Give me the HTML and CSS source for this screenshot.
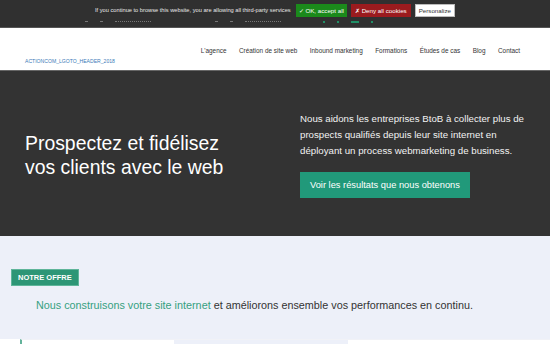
FILE: index.html
```html
<!DOCTYPE html>
<html lang="fr">
<head>
    <meta charset="UTF-8">
    <meta name="viewport" content="width=device-width, initial-scale=1.0">
    <title>Actioncom</title>
    <link rel="stylesheet" href="styles.css">
</head>
<body>
    <div class="cookie-bar">
        <div class="cookie-row">
            <span class="cookie-text">If you continue to browse this website, you are allowing all third-party services</span>
            <button class="cookie-btn accept">&#10003; OK, accept all</button>
            <button class="cookie-btn deny">&#10007; Deny all cookies</button>
            <button class="cookie-btn personalize">Personalize</button>
        </div>
        <div class="topline">
            <span class="dash"></span>
            <span class="dash"></span>
            <span class="dots"></span>
            <span class="spacer"></span>
            <span class="dash"></span>
            <span class="dash"></span>
            <span class="dots"></span>
            <span class="spacer small"></span>
            <span class="social"></span>
            <span class="social"></span>
            <span class="social wide"></span>
            <span class="social"></span>
        </div>
    </div>

    <header class="site-header">
        <a class="logo" href="#">ACTIONCOM_LGOTO_HEADER_2018</a>
        <nav class="main-nav">
            <a href="#">L'agence</a>
            <a href="#">Création de site web</a>
            <a href="#">Inbound marketing</a>
            <a href="#">Formations</a>
            <a href="#">Études de cas</a>
            <a href="#">Blog</a>
            <a href="#">Contact</a>
        </nav>
    </header>

    <section class="hero">
        <h1>Prospectez et fidélisez vos clients avec le web</h1>
        <div class="hero-side">
            <p>Nous aidons les entreprises BtoB à collecter plus de prospects qualifiés depuis leur site internet en déployant un process webmarketing de business.</p>
            <a class="hero-btn" href="#">Voir les résultats que nous obtenons</a>
        </div>
    </section>

    <section class="offer">
        <span class="badge">NOTRE OFFRE</span>
        <p class="offer-text"><a href="#">Nous construisons votre site internet</a> et améliorons ensemble vos performances en continu.</p>
    </section>

    <div class="cards">
        <div class="card first"></div>
        <div class="card alt"></div>
        <div class="card"></div>
    </div>
</body>
</html>
```

FILE: styles.css
```css
:root {
    --dark: #333333;
    --green: #21997a;
    --text: #333333;
    --light-bg: #edf0f9;
}

* {
    margin: 0;
    padding: 0;
    box-sizing: border-box;
    font-family: 'Liberation Sans', Arial, Helvetica, sans-serif;
}

body {
    background-color: white;
    color: var(--text);
    overflow: hidden;
}

a {
    text-decoration: none;
    color: inherit;
}

/* Cookie bar */
.cookie-bar {
    background-color: #303030;
    height: 28px;
    border-bottom: 1px solid #555;
    overflow: hidden;
}

.cookie-row {
    display: flex;
    justify-content: center;
    align-items: center;
    gap: 4px;
    padding-top: 3px;
    height: 14px;
    box-sizing: content-box;
}

.cookie-text {
    color: #e8e8e8;
    font-size: 5.7px;
    margin-right: 1px;
}

.cookie-btn {
    border: none;
    font-size: 6.2px;
    height: 13px;
    padding: 0 3px;
    color: white;
}

.cookie-btn.accept {
    background-color: #1b8a1b;
}

.cookie-btn.deny {
    background-color: #9b1b1e;
    padding: 0 4px;
}

.cookie-btn.personalize {
    background-color: white;
    color: #333;
    border: 1px solid #bbb;
}

.topline {
    display: flex;
    align-items: center;
    gap: 12px;
    padding-left: 85px;
    height: 9px;
}

.topline .dash {
    width: 3px;
    height: 1px;
    background-color: #777;
}

.topline .dots {
    width: 36px;
    height: 1px;
    border-top: 1px dotted #777;
}

.topline .spacer {
    width: 40px;
}

.topline .spacer.small {
    width: 18px;
}

.topline .social {
    width: 2px;
    height: 2px;
    background-color: #1f8f66;
}

.topline .social.wide {
    width: 8px;
}

/* Header */
.site-header {
    height: 43px;
    display: flex;
    justify-content: space-between;
    align-items: flex-start;
    padding: 0 30px 0 25px;
    border-bottom: 1px solid #666;
}

.logo {
    font-size: 5.1px;
    color: #3d7bb8;
    margin-top: 30px;
}

.main-nav {
    display: flex;
    gap: 12.5px;
    margin-top: 19px;
}

.main-nav a {
    font-size: 6.4px;
    color: #333;
}

/* Hero */
.hero {
    background-color: var(--dark);
    height: 165px;
    display: grid;
    grid-template-columns: 250px 1fr;
    gap: 25px;
    align-items: center;
    padding: 0 25px;
}

.hero h1 {
    color: white;
    font-size: 19.4px;
    font-weight: 400;
    line-height: 24px;
    max-width: 205px;
    padding-top: 2px;
}

.hero-side {
    padding-top: 2px;
}

.hero-side p {
    color: #f2f2f2;
    font-size: 9.7px;
    line-height: 16px;
    margin-bottom: 13px;
}

.hero-btn {
    display: inline-block;
    background-color: var(--green);
    color: white;
    font-size: 9.3px;
    line-height: 26px;
    padding: 0 10px;
}

/* Offer */
.offer {
    background-color: var(--light-bg);
    height: 103px;
    padding: 30px 11px 0;
}

.badge {
    display: inline-block;
    background-color: #2d9676;
    border: 1px solid #5fb59a;
    color: white;
    font-size: 7.5px;
    font-weight: 700;
    line-height: 15px;
    padding: 0 6px;
}

.offer-text {
    font-size: 10.8px;
    margin-top: 13px;
    padding-left: 25px;
}

.offer-text a {
    color: #35a080;
}

/* Cards */
.cards {
    display: grid;
    grid-template-columns: 174px 174px 1fr;
    height: 20px;
}

.card {
    background-color: white;
    border-top: 1px solid #f1f2f7;
}

.card.alt {
    background-color: var(--light-bg);
}

.card.first {
    border-left: 2px solid #63b39b;
    margin-left: 20px;
}
```
